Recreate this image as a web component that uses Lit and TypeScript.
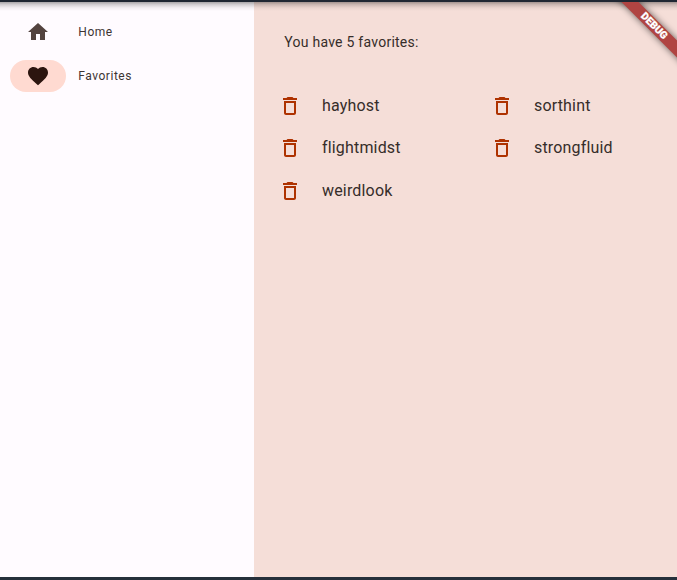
import { LitElement, html, css, svg } from "lit";
import { customElement, property } from "lit/decorators.js";
import { classMap } from "lit/directives/class-map.js";

const icons = {
  home: svg`<path d="M10 20v-6h4v6h5v-8h3L12 3 2 12h3v8z"/>`,
  favorite: svg`<path d="M12 21.35l-1.45-1.32C5.4 15.36 2 12.28 2 8.5 2 5.42 4.42 3 7.5 3c1.74 0 3.41.81 4.5 2.09C13.09 3.81 14.76 3 16.5 3 19.58 3 22 5.42 22 8.5c0 3.78-3.4 6.86-8.55 11.54L12 21.35z"/>`,
  trash: svg`<path fill-rule="evenodd" d="M6 19c0 1.1.9 2 2 2h8c1.1 0 2-.9 2-2V7H6v12zM8 9h8v10H8V9zM15.5 4l-1-1h-5l-1 1H5v2h14V4z"/>`,
};

@customElement("app-icon")
class AppIcon extends LitElement {
  @property() name: keyof typeof icons = "home";
  static styles = css`
    :host { display: block; width: 24px; height: 24px; }
    .glyph { display: block; width: 24px; height: 24px; fill: currentColor; }
  `;
  render() {
    return html`<svg class="glyph" viewBox="0 0 24 24">${icons[this.name]}</svg>`;
  }
}

@customElement("nav-item")
class NavItem extends LitElement {
  @property() icon: keyof typeof icons = "home";
  @property() label = "";
  @property({ type: Boolean }) selected = false;
  static styles = css`
    .item { display: flex; align-items: center; gap: 12px; height: 32px; color: #53433f; }
    .pill { display: grid; place-items: center; width: 56px; height: 32px; border-radius: 16px; }
    .selected .pill { background: #ffdad1; color: #2c150f; }
    .label { font-size: 12px; line-height: 16px; letter-spacing: 0.53px; margin-left: 0.3px; color: #3d3533; }
  `;
  render() {
    return html`<div class=${classMap({ item: true, selected: this.selected })}>
      <div class="pill"><app-icon .name=${this.icon}></app-icon></div>
      <span class="label">${this.label}</span>
    </div>`;
  }
}

@customElement("app-root")
class AppRoot extends LitElement {
  private favorites = ["hayhost", "sorthint", "flightmidst", "strongfluid", "weirdlook"];

  static styles = css`
    :host {
      display: block;
      height: 100vh;
      font-family: Roboto, sans-serif;
      color: #352d2a;
    }
    .window {
      position: relative;
      box-sizing: border-box;
      display: flex;
      height: 100%;
      border-top: 2px solid #1f2733;
      border-bottom: 3px solid #26303b;
      overflow: hidden;
    }
    .shade {
      position: absolute;
      inset: 0 0 auto 0;
      height: 9px;
      background: linear-gradient(rgba(0, 0, 0, 0.34), rgba(0, 0, 0, 0.17) 30%, rgba(0, 0, 0, 0.05) 65%, transparent);
    }
    .rail {
      box-sizing: border-box;
      width: 254px;
      padding: 14px 10px;
      display: flex;
      flex-direction: column;
      gap: 12px;
      background: #fffbff;
    }
    .page { flex: 1; padding: 30px 0 0 24px; background: #f5ded8; }
    .title { margin: 0 0 0 6.3px; font-size: 14px; line-height: 20px; font-weight: 400; letter-spacing: 0.25px; }
    .grid {
      display: grid;
      grid-template-columns: 212px 1fr;
      grid-template-rows: 42px 42px 44px;
      margin-top: 33px;
    }
    .favorite { display: flex; align-items: center; gap: 20px; font-size: 16px; line-height: 24px; letter-spacing: 0.17px; }
    .trash { color: #ae3200; }
    .banner {
      position: absolute;
      left: 604.3px;
      top: 17.7px;
      width: 100px;
      height: 12px;
      transform: rotate(45deg);
      background: #b04442;
      box-shadow: 0 0 7px rgba(0, 0, 0, 0.6);
      color: #fff;
      font-size: 10.3px;
      line-height: 12px;
      font-weight: 900;
      -webkit-text-stroke: 0.25px #fff;
      text-align: center;
    }
  `;

  render() {
    return html`<div class="window">
      <nav class="rail">
        <nav-item icon="home" label="Home"></nav-item>
        <nav-item icon="favorite" label="Favorites" selected></nav-item>
      </nav>
      <main class="page">
        <h1 class="title">You have ${this.favorites.length} favorites:</h1>
        <div class="grid">
          ${this.favorites.map(
            (name) => html`<div class="favorite"><app-icon class="trash" name="trash"></app-icon><span>${name}</span></div>`
          )}
        </div>
      </main>
      <div class="shade"></div>
      <div class="banner">DEBUG</div>
    </div>`;
  }
}
